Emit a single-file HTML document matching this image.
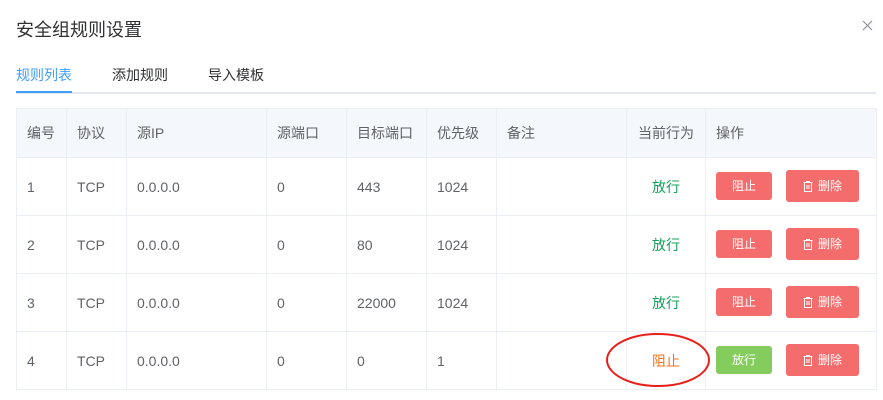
<!DOCTYPE html>
<html><head><meta charset="utf-8"><style>
*{margin:0;padding:0;box-sizing:border-box}
body{width:883px;height:400px;background:#fff;font-family:"Liberation Sans","Noto Sans CJK SC",sans-serif;color:#606266;position:relative;overflow:hidden;font-size:14px}
.title{position:absolute;left:16px;top:16px;font-size:18px;color:#303133}
.tabs{position:absolute;left:16px;top:64px;width:860px;height:30px;border-bottom:2px solid #e4e7ed}
.tab{position:absolute;top:1px;font-size:14px;color:#303133}
.bar{position:absolute;left:0;top:27px;width:56px;height:2px;background:#409eff}
table{position:absolute;left:16px;top:108px;border-collapse:collapse;width:860px;table-layout:fixed}
td,th{border:1px solid #ebeef5;text-align:left;padding-left:10px;font-weight:normal;font-size:14px}
th{background:#f4f7fb;height:49px;color:#606266}
td{height:58px}
.c{text-align:center;padding-left:0}
.btn{position:absolute;color:#fff;font-size:12px;border-radius:3px;text-align:center}
.r{background:#f56c6c}.g{background:#85cc5e}
.btn svg{vertical-align:-2px;margin-right:5px}
</style></head><body>
<div class="title">安全组规则设置</div>
<svg style="position:absolute;left:862px;top:20px" width="11" height="11"><path d="M1 1L10 10M10 1L1 10" stroke="#909399" stroke-width="1.2"/></svg>
<div class="tabs"><span class="tab" style="left:0;color:#409eff">规则列表</span><span class="tab" style="left:96px">添加规则</span><span class="tab" style="left:192px">导入模板</span><div class="bar"></div></div>
<table>
<colgroup><col style="width:50px"><col style="width:60px"><col style="width:140px"><col style="width:80px"><col style="width:80px"><col style="width:70px"><col style="width:130px"><col style="width:79px"><col style="width:171px"></colgroup>
<tr><th>编号</th><th>协议</th><th>源IP</th><th>源端口</th><th>目标端口</th><th>优先级</th><th>备注</th><th class="c">当前行为</th><th>操作</th></tr>
<tr><td>1</td><td>TCP</td><td>0.0.0.0</td><td>0</td><td>443</td><td>1024</td><td></td><td class="c" style="color:#13a05a">放行</td><td></td></tr>
<tr><td>2</td><td>TCP</td><td>0.0.0.0</td><td>0</td><td>80</td><td>1024</td><td></td><td class="c" style="color:#13a05a">放行</td><td></td></tr>
<tr><td>3</td><td>TCP</td><td>0.0.0.0</td><td>0</td><td>22000</td><td>1024</td><td></td><td class="c" style="color:#13a05a">放行</td><td></td></tr>
<tr><td>4</td><td>TCP</td><td>0.0.0.0</td><td>0</td><td>0</td><td>1</td><td></td><td class="c" style="color:#f5761a">阻止</td><td></td></tr>
</table>
<div class="btn r" style="left:716px;top:172px;width:56px;height:28px;line-height:28px">阻止</div>
<div class="btn r" style="left:786px;top:170px;width:73px;height:32px;line-height:32px"><svg width="10" height="11"><path d="M0.5 1.5H9.5M3.5 1.5V0.5H6.5V1.5M1.5 1.5V10.5H8.5V1.5M4 4V8M6 4V8" stroke="#fff" fill="none"/></svg>删除</div>
<div class="btn r" style="left:716px;top:230px;width:56px;height:28px;line-height:28px">阻止</div>
<div class="btn r" style="left:786px;top:228px;width:73px;height:32px;line-height:32px"><svg width="10" height="11"><path d="M0.5 1.5H9.5M3.5 1.5V0.5H6.5V1.5M1.5 1.5V10.5H8.5V1.5M4 4V8M6 4V8" stroke="#fff" fill="none"/></svg>删除</div>
<div class="btn r" style="left:716px;top:288px;width:56px;height:28px;line-height:28px">阻止</div>
<div class="btn r" style="left:786px;top:286px;width:73px;height:32px;line-height:32px"><svg width="10" height="11"><path d="M0.5 1.5H9.5M3.5 1.5V0.5H6.5V1.5M1.5 1.5V10.5H8.5V1.5M4 4V8M6 4V8" stroke="#fff" fill="none"/></svg>删除</div>
<div class="btn g" style="left:716px;top:346px;width:56px;height:28px;line-height:28px">放行</div>
<div class="btn r" style="left:786px;top:344px;width:73px;height:32px;line-height:32px"><svg width="10" height="11"><path d="M0.5 1.5H9.5M3.5 1.5V0.5H6.5V1.5M1.5 1.5V10.5H8.5V1.5M4 4V8M6 4V8" stroke="#fff" fill="none"/></svg>删除</div>
<svg style="position:absolute;left:0;top:0" width="883" height="400"><ellipse cx="658" cy="360" rx="51" ry="26" fill="none" stroke="#e8201a" stroke-width="2"/></svg>
</body></html>
